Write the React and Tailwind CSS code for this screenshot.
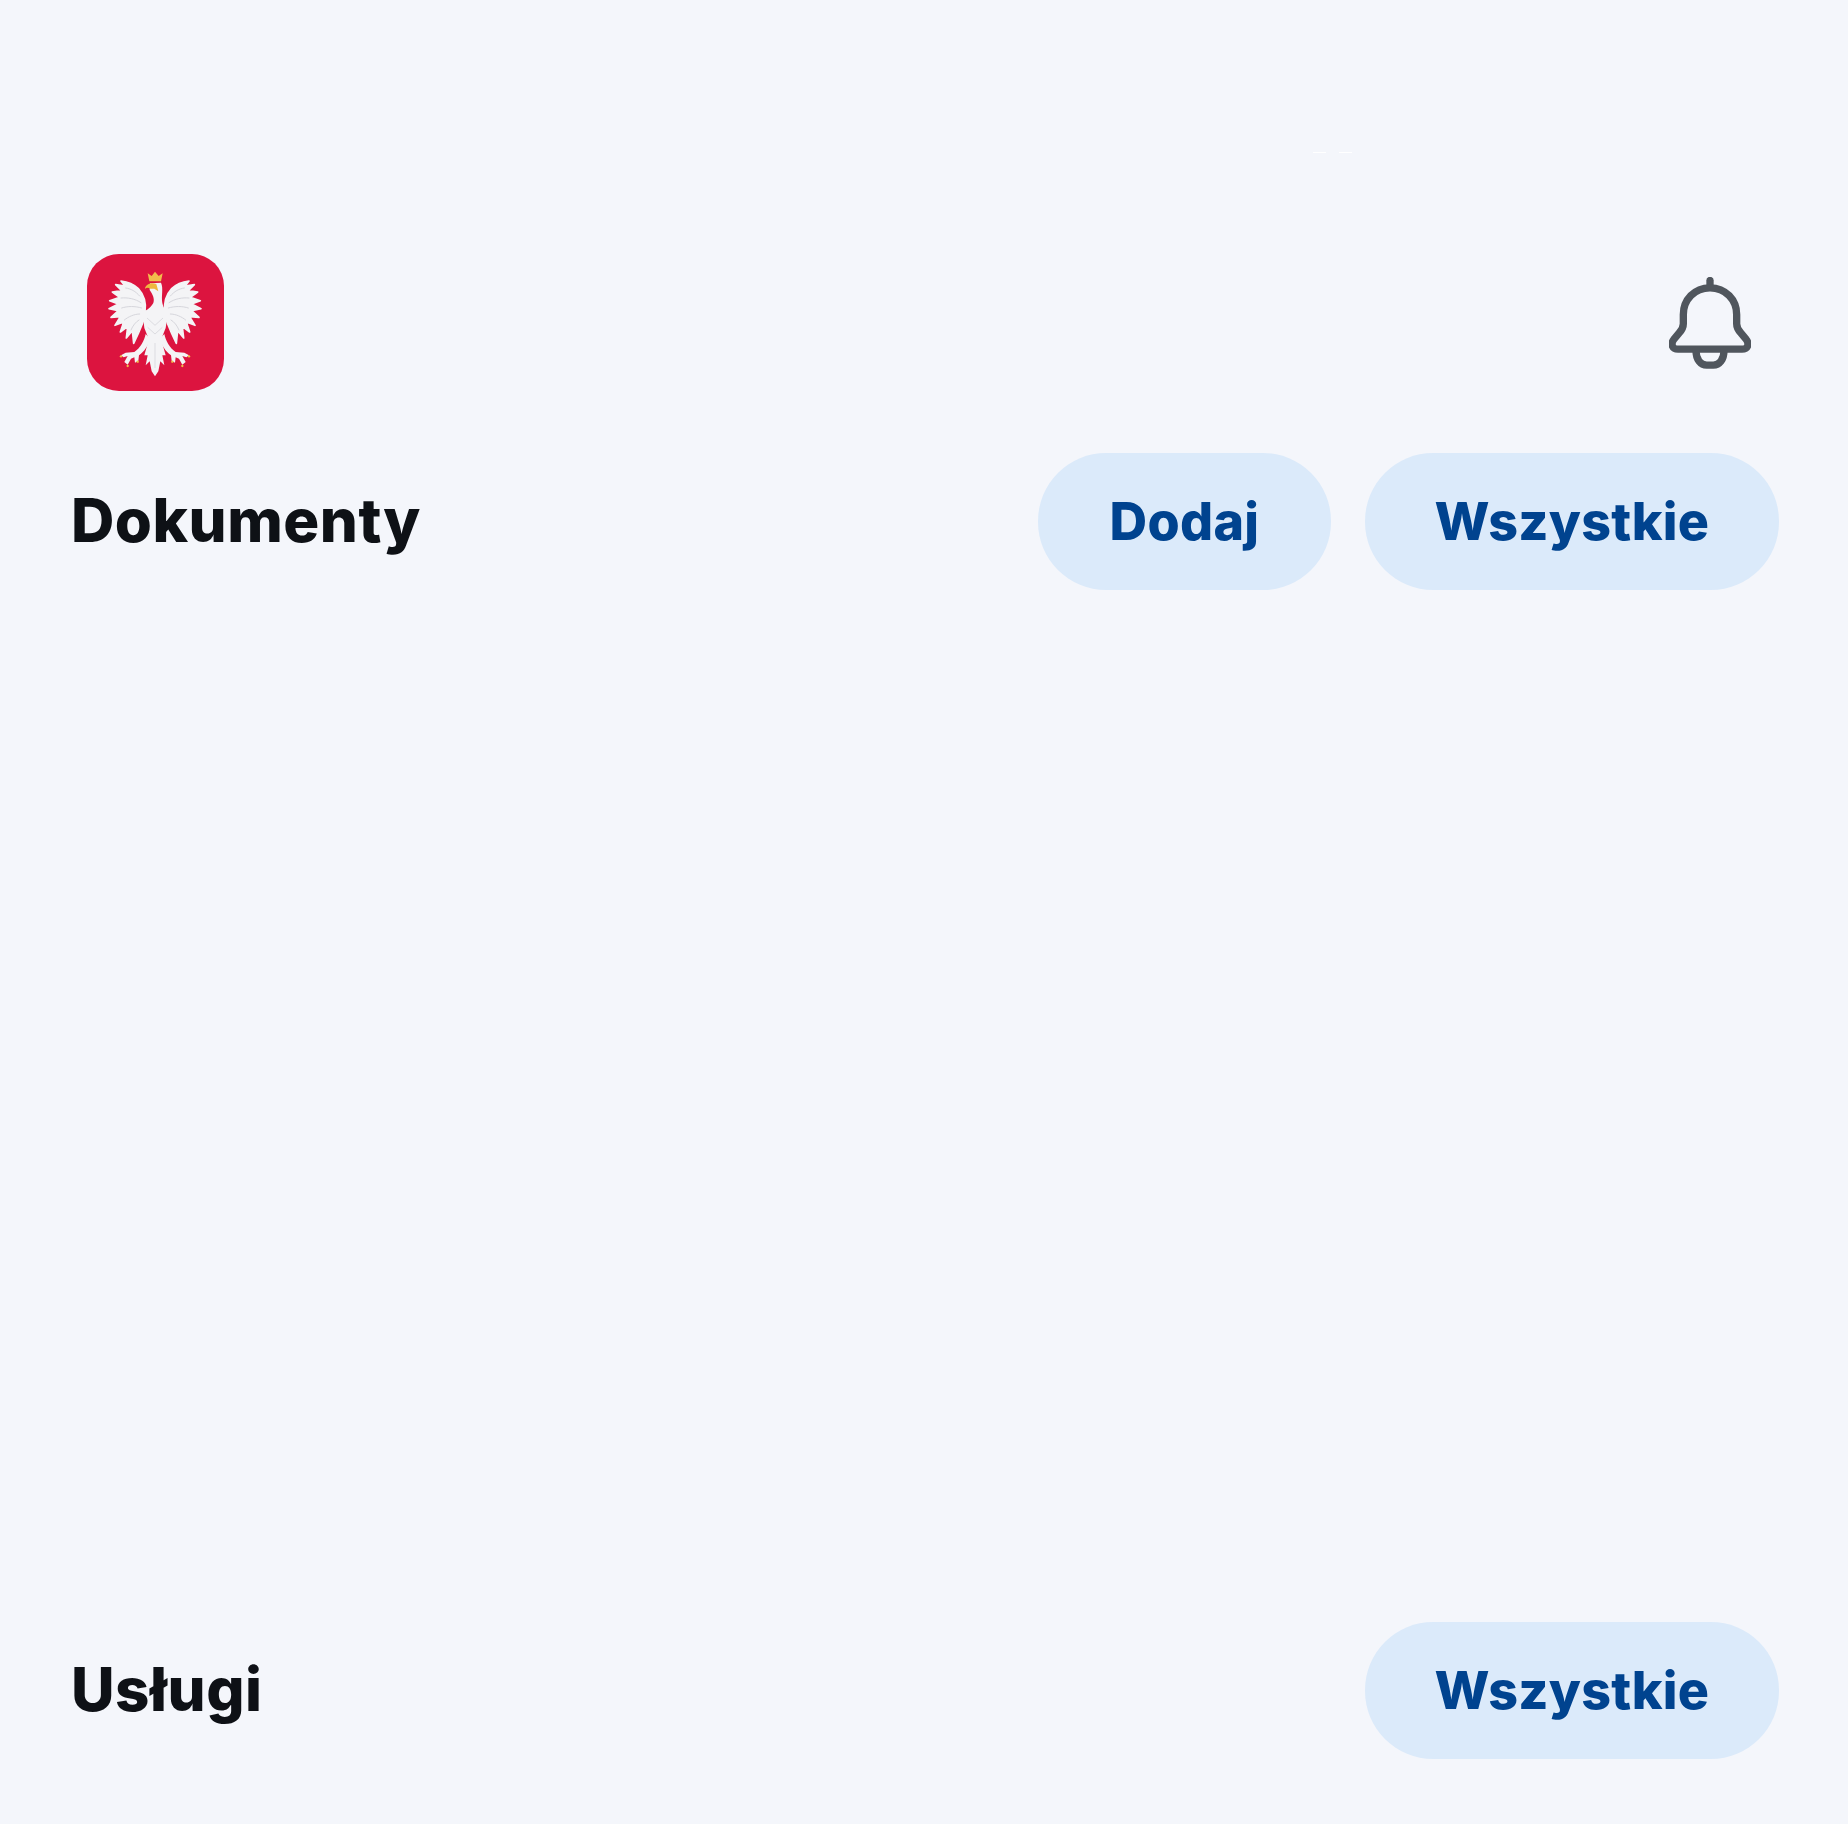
import React from 'react';

const Wing = () => (
    <g>
        <path
            d="M120 132 C124 108 118 82 100 62 C86 48 68 41 48 39 L60 54 L32 50 L50 68 L22 72 L44 88 L14 98 L40 108 L12 122 L40 128 L18 148 L46 146 L30 172 L56 162 L46 192 L68 176 L64 210 L82 188 L86 226 L100 196 L112 168 C118 155 120 145 120 132 Z"
            fill="#f4f4f6"
            stroke="#f4f4f6"
            strokeWidth="5"
            strokeLinejoin="round"
        />
        <path
            d="M104 84 C92 70 78 62 62 60 M108 104 C90 92 68 88 48 90 M110 120 C90 114 68 114 50 120 M104 138 C88 138 70 146 58 156 M102 156 C92 162 84 172 78 186"
            fill="none"
            stroke="#d6d6dc"
            strokeWidth="3"
            strokeLinecap="round"
        />
    </g>
);

const Leg = () => (
    <g>
        <path
            d="M122 198 C118 218 106 240 88 252 L62 254 L48 262 L56 268 L68 264 L58 282 L68 290 L78 272 L88 268 L90 284 L100 278 L102 262 C118 250 130 232 136 212 Z"
            fill="#f4f4f6"
        />
        <circle cx="48" cy="265" r="3.5" fill="#f0c14b" />
        <circle cx="68" cy="294" r="3.5" fill="#f0c14b" />
        <circle cx="98" cy="281" r="3.5" fill="#f0c14b" />
    </g>
);

const CoatOfArms = () => (
    <svg viewBox="-54 -42 411 411" className="w-full h-full">
        <Wing />
        <g transform="translate(300 0) scale(-1 1)">
            <Wing />
            <Leg />
        </g>
        <Leg />
        <path
            d="M112 128 C125 130 135 120 145 105 C150 92 142 78 134 66 L135 46 L168 44 C176 60 168 85 172 105 C175 118 180 128 190 128 L182 180 L168 215 L132 215 L118 180 Z"
            fill="#f4f4f6"
        />
        <path
            d="M132 212 L118 262 L128 262 L122 292 L134 280 L140 310 L150 325 L160 310 L166 280 L178 292 L172 262 L182 262 L168 212 Z"
            fill="#f4f4f6"
        />
        <path d="M126 150 L150 172 L174 150 M128 178 L150 198 L172 178 M150 225 V300" fill="none" stroke="#dcdce1" strokeWidth="3" />
        <path d="M128 16 L140 24 L150 11 L161 24 L173 16 L168 40 L133 40 Z" fill="#f2bd4c" />
        <path d="M120 60 C124 48 140 42 154 48 L160 70 L148 62 L136 62 C130 58 126 58 120 62 Z" fill="#efb73f" />
    </svg>
);

const BellIcon = () => (
    <svg viewBox="27 20 246 275" fill="none" className="w-[82px] h-[92px]" stroke="#50565d" strokeWidth="22" strokeLinecap="round" strokeLinejoin="round">
        <path d="M150 30 V48" />
        <path d="M150 52 C103 52 70 88 70 132 V160 C70 172 65 180 57 188 L42 206 C30 222 38 236 54 236 H246 C262 236 270 222 258 206 L243 188 C235 180 230 172 230 160 V132 C230 88 197 52 150 52 Z" />
        <path d="M108 240 C108 268 122 284 140 284 H160 C178 284 192 268 192 240" />
    </svg>
);

const PillButton = ({ label, width }) => (
    <button className={`${width} h-[137px] rounded-[68px] bg-[#dbeafa] text-[#00438f] text-[52px] tracking-[0.3px] font-extrabold flex items-center justify-center`}>
        {label}
    </button>
);

const App = () => {
    return (
        <div className="w-[1848px] h-[1824px] overflow-hidden bg-[#f4f6fb] font-['Inter',sans-serif]">
            <div className="flex gap-[13px] pt-[152px] pl-[1313px]">
                <div className="w-[13px] h-[1px] bg-white"></div>
                <div className="w-[13px] h-[1px] bg-white"></div>
            </div>

            <div className="flex items-center justify-between mt-[101px] pl-[87px] pr-[97px]">
                <div className="w-[137px] h-[137px] rounded-[32px] bg-[#dc143f]">
                    <CoatOfArms />
                </div>
                <BellIcon />
            </div>

            <div className="flex items-center justify-between mt-[62px] pl-[71px] pr-[69px]">
                <h2 className="pb-[3px] text-[60px] tracking-[0.5px] font-extrabold text-[#0e1116]">Dokumenty</h2>
                <div className="flex gap-[34px]">
                    <PillButton label="Dodaj" width="w-[293px]" />
                    <PillButton label="Wszystkie" width="w-[414px]" />
                </div>
            </div>

            <div className="flex items-center justify-between mt-[1032px] pl-[71px] pr-[69px]">
                <h2 className="pb-[3px] text-[60px] tracking-[0.5px] font-extrabold text-[#0e1116]">Usługi</h2>
                <PillButton label="Wszystkie" width="w-[414px]" />
            </div>
        </div>
    );
};

export default App;
